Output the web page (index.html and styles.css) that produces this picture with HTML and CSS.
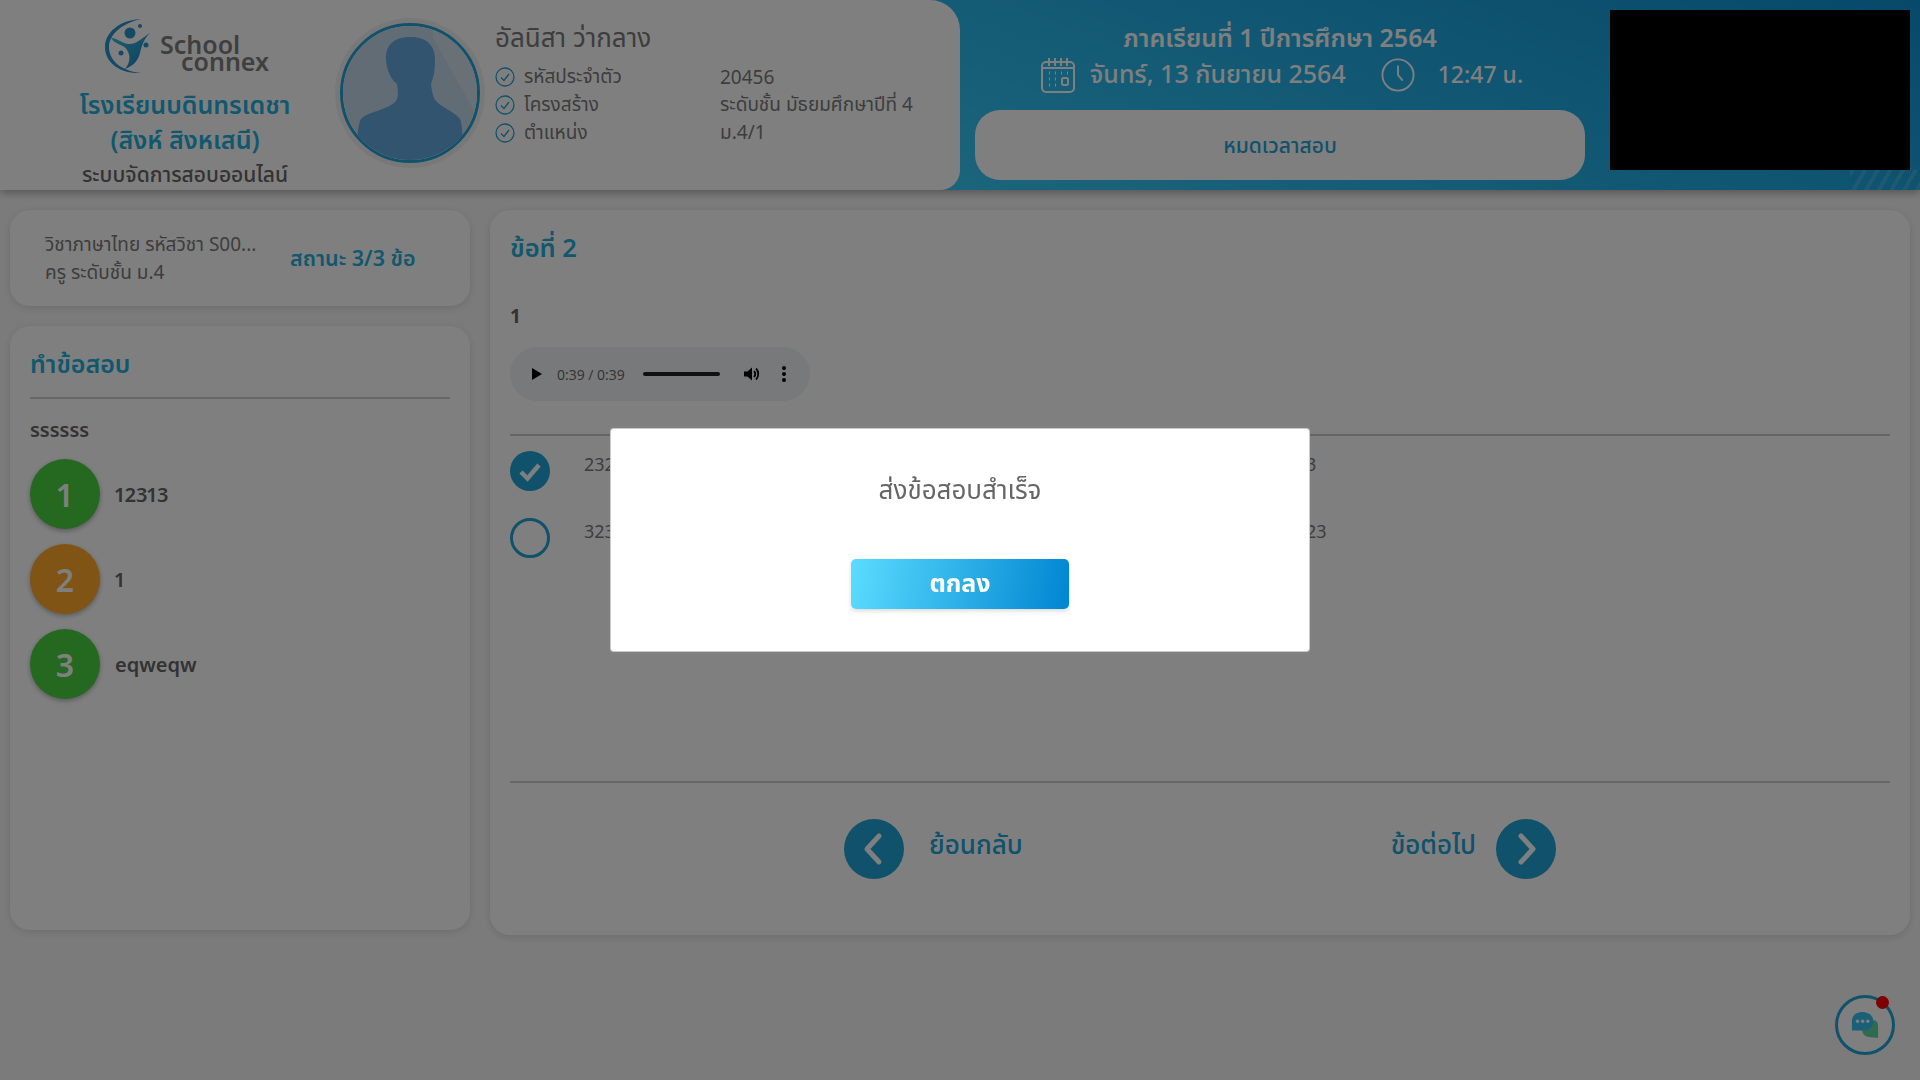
FILE: index.html
```html
<!DOCTYPE html>
<html lang="th">
<head>
    <meta charset="UTF-8">
    <meta name="viewport" content="width=device-width, initial-scale=1.0">
    <title>School Connex</title>
    <link rel="stylesheet" href="styles.css">
</head>
<body>
    <header class="top">
        <div class="profile">
            <div class="brand">
                <div class="logo">
                    <svg class="logo-mark" viewBox="0 0 46 56">
                        <defs>
                            <linearGradient id="logoFill" x1="0" y1="0" x2="1" y2="1">
                                <stop offset="0" stop-color="#36c4e0"/>
                                <stop offset="1" stop-color="#1c7cc0"/>
                            </linearGradient>
                        </defs>
                        <path d="M36 1C14 2 0 15 0 29c0 15 14 27 36 26C18 53 4 44 4 29 4 16 18 5 36 1z" fill="#2a94cc"/>
                        <circle cx="25" cy="15" r="5.500" fill="#2a94cc"/>
                        <circle cx="35" cy="8" r="2" fill="#2a94cc"/>
                        <circle cx="41" cy="27" r="2.500" fill="#2a94cc"/>
                        <circle cx="16" cy="35" r="2.500" fill="#2a94cc"/>
                        <path d="M6 20c6 0 11 5 17 6 8 1 14-6 22-11-6 6-8 12-10 20-2 8-7 13-15 16 5-6 6-13 2-19C19 26 10 27 6 20z" fill="url(#logoFill)"/>
                    </svg>
                    <div class="logo-text"><span>School</span><span class="logo-connex">connex</span></div>
                </div>
                <div class="school-name">โรงเรียนบดินทรเดชา<br>(สิงห์ สิงหเสนี)</div>
                <div class="system-name">ระบบจัดการสอบออนไลน์</div>
            </div>
            <div class="avatar">
                <svg viewBox="0 0 134 134">
                    <rect width="134" height="134" fill="#c4d8e8"/>
                    <path d="M90 12L134 90V0H90z" fill="#d2e0ec"/>
                    <path d="M43 34C42 18 52 11 68 11 84 11 93 20 92 36 92 46 90 52 88 58 89 66 90 72 94 76 100 82 112 86 117 93 120 100 120 120 120 134H14C14 120 14 100 18 93 24 86 44 84 52 76 56 72 55 66 54 58 47 52 44 44 43 34z" fill="#66a8dc"/>
                </svg>
            </div>
            <div class="person">
                <div class="person-name">อัลนิสา ว่ากลาง</div>
                <div class="person-row">
                    <svg class="check-icon" viewBox="0 0 20 20"><circle cx="10" cy="10" r="9"/><path d="M6 10.500l3 3 5-6.500"/></svg>
                    <span class="person-label">รหัสประจำตัว</span>
                    <span>20456</span>
                </div>
                <div class="person-row">
                    <svg class="check-icon" viewBox="0 0 20 20"><circle cx="10" cy="10" r="9"/><path d="M6 10.500l3 3 5-6.500"/></svg>
                    <span class="person-label">โครงสร้าง</span>
                    <span>ระดับชั้น มัธยมศึกษาปีที่ 4</span>
                </div>
                <div class="person-row">
                    <svg class="check-icon" viewBox="0 0 20 20"><circle cx="10" cy="10" r="9"/><path d="M6 10.500l3 3 5-6.500"/></svg>
                    <span class="person-label">ตำแหน่ง</span>
                    <span>ม.4/1</span>
                </div>
            </div>
        </div>
        <div class="exam-info">
            <div class="exam-clock">
                <div class="term">ภาคเรียนที่ 1 ปีการศึกษา 2564</div>
                <div class="today">
                    <svg class="today-icon" viewBox="0 0 34 36">
                        <rect x="1" y="5" width="32" height="30" rx="4"/>
                        <path d="M8 1v8M14 1v8M20 1v8M26 1v8M1 11h32"/>
                        <path class="dots" d="M8 16h1M14 16h1M20 16h1M26 16h1M8 22h1M14 22h1M8 28h1M14 28h1"/>
                        <rect x="21" y="21" width="6" height="7" rx="1.500"/>
                    </svg>
                    <span>จันทร์, 13 กันยายน 2564</span>
                    <svg class="today-icon clock-icon" viewBox="0 0 36 36">
                        <circle cx="18" cy="18" r="16.500"/>
                        <path d="M18 8v10l5 6"/>
                    </svg>
                    <span class="today-time">12:47 น.</span>
                </div>
                <div class="time-up">หมดเวลาสอบ</div>
            </div>
            <div class="camera"></div>
        </div>
    </header>

    <main class="content">
        <aside class="side">
            <div class="card subject">
                <div class="subject-text">
                    <div class="subject-title">วิชาภาษาไทย รหัสวิชา S00...</div>
                    <div>ครู ระดับชั้น ม.4</div>
                </div>
                <div class="subject-status">สถานะ 3/3 ข้อ</div>
            </div>
            <div class="card question-list">
                <h2 class="card-title">ทำข้อสอบ</h2>
                <div class="set-name">ssssss</div>
                <div class="question-item">
                    <span class="number number-done">1</span>
                    <span>12313</span>
                </div>
                <div class="question-item">
                    <span class="number number-current">2</span>
                    <span>1</span>
                </div>
                <div class="question-item">
                    <span class="number number-done">3</span>
                    <span>eqweqw</span>
                </div>
            </div>
        </aside>

        <section class="card question">
            <h2 class="question-title">ข้อที่ 2</h2>
            <div class="question-text">1</div>
            <div class="player">
                <span class="player-play"></span>
                <span class="player-time">0:39 / 0:39</span>
                <span class="player-bar"></span>
                <svg class="player-volume" viewBox="0 0 16 16">
                    <path d="M0 5.500h3.500L8 1.500v13l-4.500-4H0z" fill="#000"/>
                    <path d="M10 5c1.500 1.800 1.500 4.200 0 6M12 2.500c3 3 3 8 0 11" fill="none" stroke="#000" stroke-width="1.800"/>
                </svg>
                <span class="player-more"><i></i><i></i><i></i></span>
            </div>
            <div class="answers">
                <div class="answer">
                    <span class="radio radio-on">
                        <svg viewBox="0 0 40 40"><path d="M11 21l6.500 6.500L29 14" fill="none" stroke="#fff" stroke-width="4.500"/></svg>
                    </span>
                    <span>232323</span>
                </div>
                <div class="answer">
                    <span class="radio"></span>
                    <span>2323</span>
                </div>
                <div class="answer">
                    <span class="radio"></span>
                    <span>323232</span>
                </div>
                <div class="answer">
                    <span class="radio"></span>
                    <span>32323</span>
                </div>
            </div>
            <div class="pager">
                <div class="pager-link">
                    <span class="pager-btn">
                        <svg viewBox="0 0 60 60"><path d="M35 17L23 30l12 13"/></svg>
                    </span>
                    <span class="pager-label">ย้อนกลับ</span>
                </div>
                <div class="pager-link pager-next">
                    <span class="pager-label">ข้อต่อไป</span>
                    <span class="pager-btn">
                        <svg viewBox="0 0 60 60"><path d="M25 17l12 13-12 13"/></svg>
                    </span>
                </div>
            </div>
        </section>
    </main>

    <div class="chat">
        <svg viewBox="0 0 32 30">
            <path d="M14 10h11c3 0 5 2 5 6v13l-8-1c-5 0-9-3-9-8z" fill="#5ed6a0"/>
            <path d="M13 1c7 0 12 4 12 10s-5 10-12 10H2V11C2 5 6 1 13 1z" fill="#36bff0"/>
            <circle cx="8" cy="11" r="1.800" fill="#fff"/>
            <circle cx="13.500" cy="11" r="1.800" fill="#fff"/>
            <circle cx="19" cy="11" r="1.800" fill="#fff"/>
        </svg>
        <span class="chat-badge"></span>
    </div>

    <div class="overlay">
        <div class="modal">
            <div class="modal-text">ส่งข้อสอบสำเร็จ</div>
            <button class="modal-btn" type="button">ตกลง</button>
        </div>
    </div>
</body>
</html>
```

FILE: styles.css
```css
* {
    box-sizing: border-box;
}
body {
    margin: 0;
    height: 1080px;
    overflow: hidden;
    font-family: "Noto Sans", "Noto Sans Thai", sans-serif;
    font-size: 18px;
    color: #7a7a7a;
    background-color: #f7f7f7;
}

/* header */
.top {
    position: relative;
    display: flex;
    height: 190px;
    background: linear-gradient(200deg, #0f92d4 0%, #36caf8 60%);
    box-shadow: 0 3px 8px rgba(0, 0, 0, 0.3);
}
.top::after {
    content: "";
    position: absolute;
    right: 0;
    bottom: 0;
    width: 70px;
    height: 20px;
    background: repeating-linear-gradient(120deg, rgba(255, 255, 255, 0.14) 0 4px, transparent 4px 11px);
}
.profile {
    display: flex;
    width: 960px;
    padding-left: 30px;
    background: #fff;
    border-radius: 0 30px 20px 0;
}
.brand {
    width: 310px;
    padding-top: 18px;
    text-align: center;
}
.logo {
    display: flex;
    justify-content: center;
    height: 56px;
    padding-left: 4px;
    color: #7e7e7e;
}
.logo-mark {
    width: 46px;
    height: 56px;
}
.logo-text {
    display: flex;
    flex-direction: column;
    margin-left: 9px;
    padding-top: 18px;
    font-size: 25px;
    font-weight: 600;
    line-height: 17px;
    text-align: left;
}
.logo-connex {
    margin-left: 21px;
}
.school-name {
    margin-top: 13px;
    font-size: 25px;
    font-weight: 600;
    line-height: 35px;
    color: #22b0dc;
}
.system-name {
    font-size: 21px;
    font-weight: 500;
    line-height: 34px;
    color: #666;
}
.avatar {
    flex: none;
    width: 140px;
    height: 140px;
    margin-top: 23px;
    border: 3px solid #20a4d6;
    border-radius: 50%;
    overflow: hidden;
    box-shadow: 0 0 0 5px #f0f0f0;
}
.avatar svg {
    display: block;
    width: 100%;
    height: 100%;
}
.person {
    padding: 18px 0 0 15px;
    font-size: 19px;
}
.person-name {
    margin-bottom: 7px;
    font-size: 26px;
    line-height: 38px;
}
.person-row {
    display: flex;
    align-items: center;
    height: 28px;
}
.person-label {
    width: 196px;
}
.check-icon {
    width: 20px;
    height: 20px;
    margin-right: 9px;
    fill: none;
    stroke: #20a4d6;
    stroke-width: 1.300;
}

.exam-info {
    display: flex;
    flex: 1;
    padding: 10px 10px 0 15px;
}
.exam-clock {
    width: 610px;
    margin-right: 25px;
    color: #fff;
    text-align: center;
}
.term {
    padding-top: 8px;
    font-size: 25px;
    font-weight: 600;
    line-height: 38px;
}
.today {
    display: flex;
    justify-content: center;
    align-items: center;
    height: 38px;
    padding-left: 4px;
    font-size: 25px;
    font-weight: 500;
}
.today-time {
    font-size: 23px;
}
.today-icon {
    width: 34px;
    height: 36px;
    margin-right: 15px;
    fill: none;
    stroke: #fff;
    stroke-width: 2;
}
.today-icon .dots {
    stroke-width: 3;
}
.clock-icon {
    margin-left: 35px;
    margin-right: 23px;
}
.time-up {
    height: 70px;
    margin-top: 16px;
    font-size: 21px;
    font-weight: 500;
    line-height: 70px;
    color: #20a4d6;
    background: #fff;
    border-radius: 25px;
}
.camera {
    width: 300px;
    height: 160px;
    background: #000;
}

/* main area */
.content {
    display: flex;
    align-items: flex-start;
    gap: 20px;
    padding: 20px 10px;
}
.card {
    background: #fff;
    border-radius: 20px;
    box-shadow: 0 2px 8px rgba(0, 0, 0, 0.12);
}
.side {
    flex: none;
    width: 460px;
}
.subject {
    display: flex;
    align-items: center;
    height: 96px;
    padding-left: 35px;
    margin-bottom: 20px;
    font-size: 19px;
    line-height: 28px;
}
.subject-text {
    width: 245px;
}
.subject-status {
    font-size: 21.500px;
    font-weight: 600;
    white-space: nowrap;
    color: #22b0dc;
}
.question-list {
    height: 604px;
    padding: 19px 20px;
}
.card-title {
    margin: 0;
    padding: 0 0 16px 0;
    font-size: 25px;
    font-weight: 600;
    line-height: 36px;
    color: #22b0dc;
    border-bottom: 2px solid #ccc;
}
.set-name {
    margin: 18px 0 16px 0;
    font-weight: 600;
    font-size: 20px;
    line-height: 26px;
    color: #666;
}
.question-item {
    display: flex;
    align-items: center;
    height: 70px;
    margin-bottom: 15px;
    font-size: 20px;
    font-weight: 600;
    font-variant-numeric: proportional-nums;
    color: #666;
}
.number {
    display: flex;
    justify-content: center;
    align-items: center;
    width: 70px;
    height: 70px;
    margin-right: 15px;
    font-size: 32px;
    font-weight: 600;
    color: #fff;
    border-radius: 50%;
    box-shadow: 0 2px 5px rgba(0, 0, 0, 0.3);
}
.number-done {
    background: #4ad040;
}
.number-current {
    background: #ffa928;
}

.question {
    flex: 1;
    height: 725px;
    padding: 19px 20px;
}
.question-title {
    margin: 0 0 37px 0;
    font-size: 25.500px;
    font-weight: 600;
    line-height: 36px;
    color: #22b0dc;
}
.question-text {
    margin-bottom: 17px;
    font-size: 19px;
    font-weight: 700;
    line-height: 28px;
    color: #666;
}
.player {
    display: flex;
    align-items: center;
    width: 300px;
    height: 54px;
    padding-left: 22px;
    background: #f1f3f4;
    border-radius: 27px;
}
.player-play {
    width: 0;
    height: 0;
    border-left: 10px solid #000;
    border-top: 6px solid transparent;
    border-bottom: 6px solid transparent;
}
.player-time {
    width: 69px;
    margin-left: 15px;
    font-family: "Open Sans", sans-serif;
    font-size: 14px;
    white-space: nowrap;
    color: #666;
}
.player-bar {
    width: 77px;
    height: 4px;
    margin-left: 17px;
    background: #222;
    border-radius: 2px;
}
.player-volume {
    width: 16px;
    height: 16px;
    margin-left: 24px;
}
.player-more {
    display: flex;
    flex-direction: column;
    gap: 2px;
    margin-left: 22px;
}
.player-more i {
    width: 4px;
    height: 4px;
    background: #000;
    border-radius: 50%;
}
.answers {
    display: grid;
    grid-template-columns: 691px 1fr;
    row-gap: 27px;
    margin-top: 33px;
    padding-top: 15px;
    border-top: 2px solid #ccc;
}
.answer {
    display: flex;
    align-items: flex-start;
    gap: 34px;
    height: 40px;
    line-height: 26px;
}
.radio {
    flex: none;
    width: 40px;
    height: 40px;
    border: 3px solid #20a4d6;
    border-radius: 50%;
}
.radio-on {
    background: #20a4d6;
    border: none;
}
.radio svg {
    display: block;
}
.pager {
    display: flex;
    justify-content: space-between;
    margin-top: 223px;
    padding: 36px 334px 0 334px;
    border-top: 2px solid #ccc;
}
.pager-link {
    display: flex;
    align-items: center;
    gap: 25px;
    font-size: 26px;
    font-weight: 500;
    color: #20a4d6;
}
.pager-next {
    gap: 20px;
}
.pager-label {
    margin-bottom: 6px;
}
.pager-btn {
    width: 60px;
    height: 60px;
    background: #20a4d6;
    border-radius: 50%;
}
.pager-btn svg {
    display: block;
    fill: none;
    stroke: #fff;
    stroke-width: 5;
    stroke-linecap: round;
    stroke-linejoin: round;
}

/* chat button */
.chat {
    position: fixed;
    right: 25px;
    bottom: 25px;
    display: flex;
    justify-content: center;
    align-items: center;
    width: 60px;
    height: 60px;
    background: #fff;
    border: 3px solid #20a4d6;
    border-radius: 50%;
}
.chat svg {
    width: 30px;
    height: 28px;
}
.chat-badge {
    position: absolute;
    top: -2px;
    right: 3px;
    width: 13px;
    height: 13px;
    background: #ff0000;
    border-radius: 50%;
}

/* popup */
.overlay {
    position: fixed;
    inset: 0;
    display: flex;
    justify-content: center;
    align-items: center;
    background: rgba(0, 0, 0, 0.5);
}
.modal {
    width: 700px;
    height: 224px;
    padding-top: 35px;
    text-align: center;
    background: #fff;
    border: 1px solid rgba(0, 0, 0, 0.2);
    border-radius: 4px;
}
.modal-text {
    margin-bottom: 45px;
    font-size: 26px;
    line-height: 50px;
    color: #666;
}
.modal-btn {
    width: 218px;
    height: 50px;
    padding: 0 0 1px 0;
    font-family: inherit;
    font-size: 25px;
    font-weight: 700;
    color: #fff;
    background: linear-gradient(100deg, #5bdcff 0%, #0085d1 100%);
    border: none;
    border-radius: 5px;
    box-shadow: 0 2px 4px rgba(0, 0, 0, 0.15);
}
```
